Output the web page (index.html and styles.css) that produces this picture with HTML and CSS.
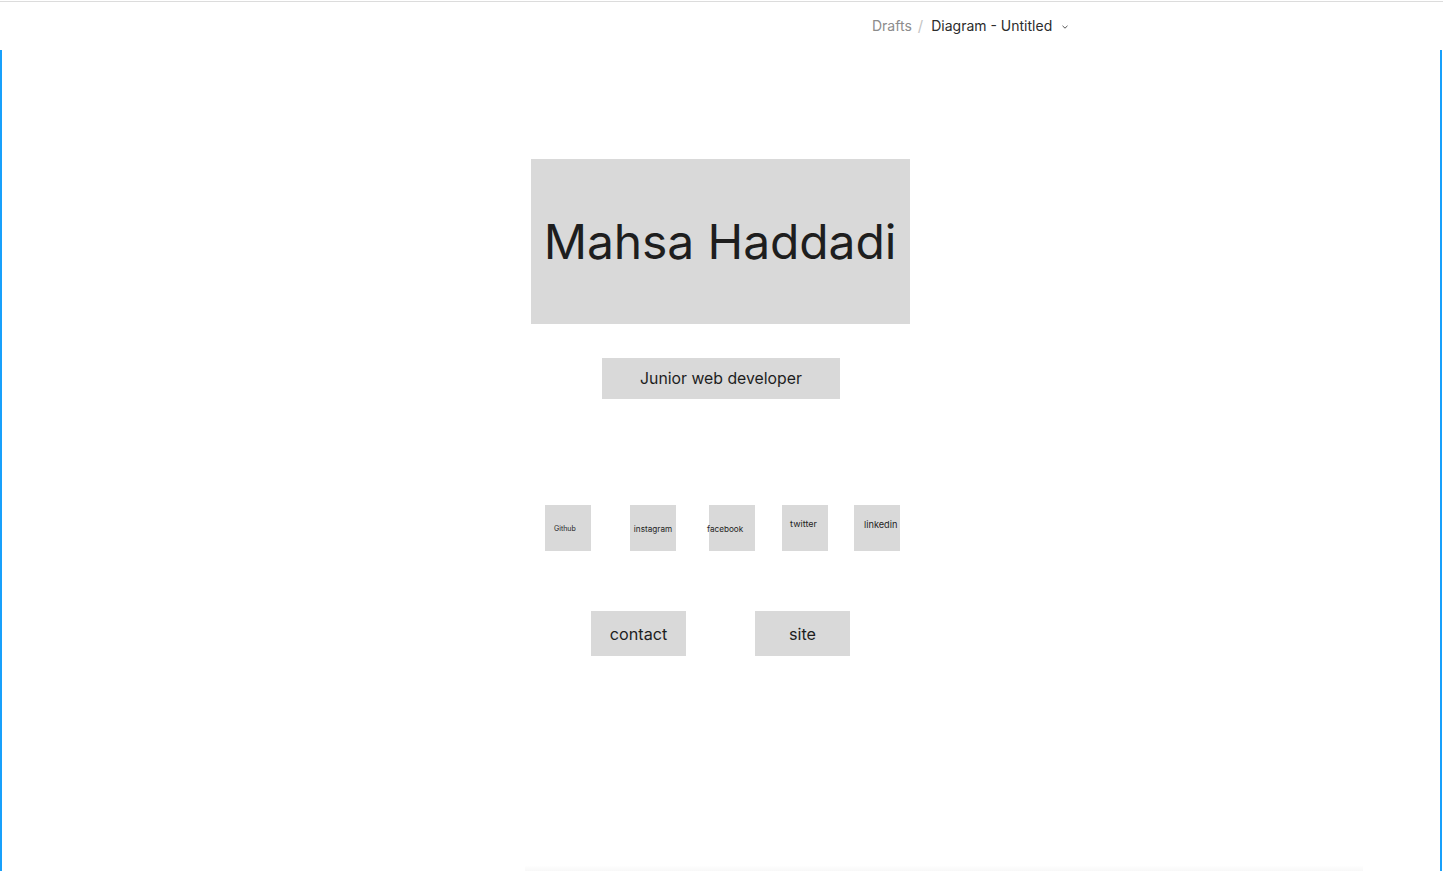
FILE: index.html
```html
<!DOCTYPE html>
<html lang="en">
<head>
<meta charset="utf-8">
<title>Diagram - Untitled</title>
<link rel="stylesheet" href="styles.css">
</head>
<body>
<header class="topbar">
  <nav class="crumbs">
    <span class="crumb-muted">Drafts</span>
    <span class="crumb-sep">/</span>
    <span class="crumb-current">Diagram - Untitled</span>
    <svg class="chev" width="8" height="6" viewBox="0 0 8 6"><path d="M1.5 1.8 L4 4.2 L6.5 1.8" fill="none" stroke="#555" stroke-width="1"/></svg>
  </nav>
</header>
<main class="canvas">
  <div class="frame">
    <div class="title-box"><h1 class="title">Mahsa Haddadi</h1></div>
    <div class="role-box">Junior web developer</div>
    <div class="socials">
      <div class="social s-github">Github</div>
      <div class="social s-instagram">instagram</div>
      <div class="social s-facebook">facebook</div>
      <div class="social s-twitter">twitter</div>
      <div class="social s-linkedin">linkedin</div>
    </div>
    <div class="actions">
      <div class="action">contact</div>
      <div class="action">site</div>
    </div>
  </div>
  <div class="bottom-shadow"></div>
</main>
</body>
</html>
```
FILE: styles.css
```css
* { box-sizing: border-box; }
html, body { margin: 0; padding: 0; height: 100%; }
body {
  font-family: Inter, "Noto Sans", sans-serif;
  color: #1e1e1e;
  background: #fff;
  display: flex;
  flex-direction: column;
  overflow: hidden;
}
.topbar {
  height: 50px;
  flex: none;
  position: relative;
  display: flex;
  align-items: center;
  justify-content: flex-start;
  padding-left: 872px;
}
.topbar::before {
  content: "";
  position: absolute;
  left: 0; right: 0; top: 1px;
  height: 1px;
  background: #dcdcdc;
}
.crumbs {
  display: flex;
  align-items: center;
  font-size: 14px;
  line-height: 20px;
  margin-top: 2px;
}
.crumb-muted { color: #8c8c8c; }
.crumb-sep { color: #c4c4c4; margin: 0 8px 0 6px; font-size: 15px; }
.crumb-current { color: #2c2c2c; }
.chev { margin-left: 9px; margin-top: 1px; }
.canvas {
  flex: 1;
  border-left: 2px solid #18a0fb;
  border-right: 2px solid #18a0fb;
  margin-right: 1px;
  position: relative;
}
.frame {
  display: flex;
  flex-direction: column;
  align-items: center;
  padding-top: 109px;
  margin-left: -2px;
}
.title-box {
  width: 379px;
  height: 165px;
  background: #d9d9d9;
  display: flex;
  align-items: center;
  justify-content: center;
}
.title {
  margin: 0;
  font-weight: 400;
  font-size: 48px;
  letter-spacing: -0.1px;
  line-height: 1;
  color: #1e1e1e;
}
.role-box {
  margin-top: 34px;
  margin-left: 2px;
  width: 238px;
  height: 41px;
  background: #d9d9d9;
  display: flex;
  align-items: center;
  justify-content: center;
  font-size: 15.8px;
  color: #1e1e1e;
}
.socials {
  margin-top: 106px;
  display: flex;
  margin-left: 5px;
}
.social {
  width: 46px;
  height: 46px;
  background: #d9d9d9;
  display: flex;
  justify-content: center;
  color: #1e1e1e;
  white-space: nowrap;
}
.s-github { font-size: 7px; align-items: center; justify-content: flex-start; padding-left: 9px; }
.s-instagram { margin-left: 39px; font-size: 8.2px; align-items: center; padding-top: 2px; }
.s-facebook { margin-left: 33px; font-size: 8.2px; align-items: center; justify-content: flex-start; padding-top: 2px; text-indent: -2px; }
.s-twitter { margin-left: 27px; font-size: 9px; align-items: flex-start; padding-top: 13px; padding-right: 3px; }
.s-linkedin { margin-left: 26px; font-size: 9.2px; align-items: flex-start; padding-top: 14px; justify-content: flex-start; padding-left: 10px; }
.actions {
  margin-top: 60px;
  display: flex;
  gap: 69px;
}
.action {
  width: 95px;
  height: 45px;
  background: #d9d9d9;
  display: flex;
  align-items: center;
  justify-content: center;
  font-size: 16.2px;
  color: #1e1e1e;
  padding-left: 1px;
}
.bottom-shadow {
  position: absolute;
  left: 523px;
  width: 838px;
  bottom: 0;
  height: 5px;
  background: linear-gradient(#fefefe, #f8f8f8);
}
```
